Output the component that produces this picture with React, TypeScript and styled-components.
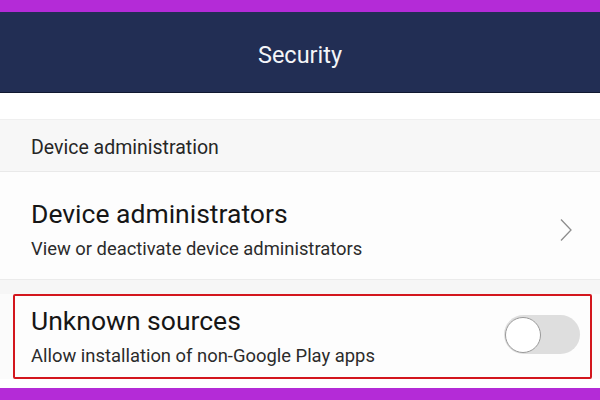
import styled, { createGlobalStyle } from 'styled-components';

const GlobalStyle = createGlobalStyle`
  html, body {
    margin: 0;
    padding: 0;
    background: #ffffff;
  }
  body {
    font-family: Roboto, 'Liberation Sans', sans-serif;
  }
`;

const Screen = styled.div`
  width: 600px;
  height: 400px;
  display: flex;
  flex-direction: column;
  overflow: hidden;
  background: #fbfbfb;
`;

const FrameBand = styled.div`
  height: 12px;
  flex: none;
  background: #b42bd7;
`;

const AppBar = styled.header`
  height: 81px;
  flex: none;
  display: flex;
  justify-content: center;
  align-items: flex-start;
  padding-top: 29px;
  background: #222e54;
  border-bottom: 1px solid #101830;
  box-sizing: border-box;
  color: #f4f5f8;
  font-size: 23.5px;
  line-height: 28px;
`;

const Blank = styled.div`
  height: 27px;
  flex: none;
  background: #ffffff;
  border-bottom: 1px solid #efefef;
  box-sizing: border-box;
`;

const SectionLabel = styled.div`
  height: 52px;
  flex: none;
  padding: 17px 0 0 31px;
  background: #f7f7f7;
  border-bottom: 1px solid #e9e9e9;
  box-sizing: border-box;
  color: #262626;
  font-size: 19.5px;
  line-height: 22px;
`;

const ListRow = styled.div`
  height: 108px;
  flex: none;
  display: flex;
  align-items: flex-start;
  justify-content: space-between;
  padding: 27px 27px 0 31px;
  background: #fdfdfd;
  border-bottom: 1px solid #ebebeb;
  box-sizing: border-box;
`;

const Gap = styled.div`
  height: 14px;
  flex: none;
  background: #f6f6f6;
`;

const Highlight = styled.div`
  height: 85px;
  flex: none;
  margin: 0 8px 0 13px;
  display: flex;
  align-items: flex-start;
  justify-content: space-between;
  padding: 10px 10px 0 16px;
  border: 2px solid #d3161d;
  border-radius: 2px;
  background: #fdfdfd;
  box-sizing: border-box;
`;

const Texts = styled.div`
  display: flex;
  flex-direction: column;
  gap: 9px;
`;

const Title = styled.div`
  font-size: 26.5px;
  color: #161616;
  line-height: 30px;
`;

const Subtitle = styled.div`
  font-size: 18.4px;
  color: #2b2b2b;
  line-height: 22px;
`;

const Footer = styled.div`
  flex: 1;
  background: #ffffff;
`;

const Toggle = styled.div`
  width: 76px;
  height: 39px;
  margin-top: 9px;
  border-radius: 20px;
  background: #dedede;
  display: flex;
  align-items: center;
  padding-left: 1px;
  box-sizing: border-box;
`;

const Knob = styled.div`
  width: 36px;
  height: 36px;
  border-radius: 50%;
  background: #ffffff;
  border: 1px solid #9a9a9a;
  box-sizing: border-box;
`;

const ChevronBox = styled.div`
  margin-top: 19px;
`;

const Chevron = () => (
  <ChevronBox>
    <svg width="14" height="24" viewBox="0 0 14 24">
      <path d="M2 1.5 L12 12 L2 22.5" fill="none" stroke="#8d8d8d" strokeWidth="1.3" />
    </svg>
  </ChevronBox>
);

export default function App() {
  return (
    <>
      <GlobalStyle />
      <Screen>
        <FrameBand />
        <AppBar>Security</AppBar>
        <Blank />
        <SectionLabel>Device administration</SectionLabel>
        <ListRow>
          <Texts>
            <Title>Device administrators</Title>
            <Subtitle>View or deactivate device administrators</Subtitle>
          </Texts>
          <Chevron />
        </ListRow>
        <Gap />
        <Highlight>
          <Texts>
            <Title>Unknown sources</Title>
            <Subtitle>Allow installation of non-Google Play apps</Subtitle>
          </Texts>
          <Toggle>
            <Knob />
          </Toggle>
        </Highlight>
        <Footer />
        <FrameBand />
      </Screen>
    </>
  );
}
